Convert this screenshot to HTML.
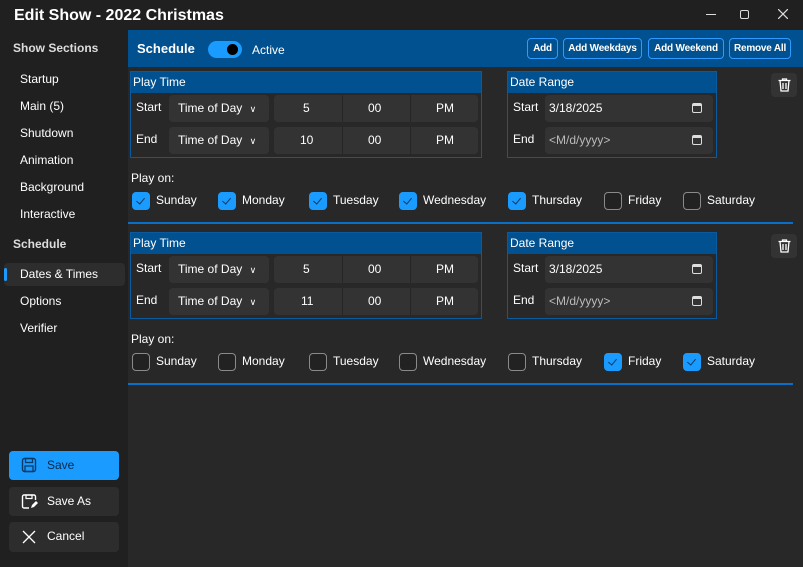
<!DOCTYPE html>
<html><head><meta charset="utf-8"><style>
*{box-sizing:border-box;margin:0;padding:0}
body{width:803px;height:567px;overflow:hidden;background:#202020;font-family:"Liberation Sans",sans-serif;color:#fff;position:relative;font-size:12px;white-space:nowrap}
.a{position:absolute}
.title{left:14px;top:7px;font-size:16px;font-weight:bold}
.side{left:0;top:30px;width:128px;height:537px;background:#202020}
.si{position:absolute;left:20px;font-size:12px}
.sh{position:absolute;left:13px;font-size:12px;color:#ddd;font-weight:bold}
.main{left:128px;top:30px;width:675px;height:537px;background:#282828}
.hdr{left:128px;top:30px;width:675px;height:37px;background:#01508f}
.btn{position:absolute;top:38px;height:21px;border:1px solid #2f9bff;border-radius:4px;background:#01508f;font-size:10px;font-weight:bold;text-align:center;line-height:19px;letter-spacing:-0.2px}
.grp{position:absolute;border:1px solid #0a5aa0;}
.gh{position:absolute;left:0;top:0;right:0;height:21px;background:#01508f;padding-left:2px;line-height:21px;font-size:12px}
.lbl{position:absolute;font-size:12px}
.box{position:absolute;background:#333;border-radius:4px;height:27px;line-height:27px;font-size:12px}
.chk{position:absolute;width:18px;height:18px;border-radius:4px;border:1px solid #8a8a8a;background:#222}
.chk.on{background:#1a9bff;border-color:#1a9bff}
.chk.on:after{content:"";position:absolute;left:5px;top:3px;width:4px;height:7px;border:solid #0a3a66;border-width:0 1.5px 1.5px 0;transform:rotate(40deg)}
.cl{position:absolute;font-size:12px}
.sep{position:absolute;left:128px;width:665px;height:2px;background:#0a6fc7}
.trash{position:absolute;left:771px;width:26px;height:24px;background:#333;border-radius:4px}
.sb{position:absolute;left:9px;width:110px;height:29px;border-radius:4px;background:#2d2d2d;font-size:12px;line-height:29px;padding-left:38px}
.cal{position:absolute;width:10px;height:10px;border:1.5px solid #ddd;border-radius:2px;border-top-width:3px}
</style></head><body>
<div class="a title">Edit Show - 2022 Christmas</div>
<div class="a" style="left:706px;top:14px;width:10px;height:1px;background:#ddd"></div>
<div class="a" style="left:740px;top:10px;width:9px;height:9px;border:1px solid #ddd;border-radius:2px"></div>
<svg class="a" style="left:778px;top:9px" width="10" height="10" viewBox="0 0 10 10"><path d="M0 0L10 10M10 0L0 10" stroke="#ddd" stroke-width="1.2"/></svg>
<div class="a side">
<div class="sh" style="top:11px">Show Sections</div>
<div class="si" style="top:42px">Startup</div>
<div class="si" style="top:69px">Main (5)</div>
<div class="si" style="top:96px">Shutdown</div>
<div class="si" style="top:123px">Animation</div>
<div class="si" style="top:150px">Background</div>
<div class="si" style="top:177px">Interactive</div>
<div class="sh" style="top:207px">Schedule</div>
<div style="position:absolute;left:4px;top:233px;width:121px;height:23px;background:#2d2d2d;border-radius:4px"></div>
<div style="position:absolute;left:4px;top:238px;width:3px;height:13px;background:#1a9bff;border-radius:2px"></div>
<div class="si" style="top:237px">Dates &amp; Times</div>
<div class="si" style="top:264px">Options</div>
<div class="si" style="top:291px">Verifier</div>
</div>
<div class="sb" style="top:451px;background:#1a9bff;color:#0a2a4a">Save</div>
<svg class="a" style="left:21px;top:457px" width="16" height="16" viewBox="0 0 16 16"><rect x="1.5" y="1.5" width="13" height="13" rx="2" fill="none" stroke="#0a3a66" stroke-width="1.4"/><rect x="4.5" y="1.5" width="7" height="4" fill="none" stroke="#0a3a66" stroke-width="1.3"/><rect x="4" y="9" width="8" height="5.5" fill="none" stroke="#0a3a66" stroke-width="1.3"/></svg>
<div class="sb" style="top:487px">Save As</div>
<svg class="a" style="left:21px;top:493px" width="17" height="17" viewBox="0 0 17 17"><path d="M8 15H3a1.5 1.5 0 0 1-1.5-1.5v-10A1.5 1.5 0 0 1 3 2h10a1.5 1.5 0 0 1 1.5 1.5V7" fill="none" stroke="#fff" stroke-width="1.4"/><rect x="5" y="2" width="6" height="3.5" fill="none" stroke="#fff" stroke-width="1.2"/><path d="M10 15l1-3 4-4 2 2-4 4z" fill="#fff"/></svg>
<div class="sb" style="top:522px;height:30px">Cancel</div>
<svg class="a" style="left:22px;top:530px" width="14" height="14" viewBox="0 0 14 14"><path d="M1 1L13 13M13 1L1 13" stroke="#fff" stroke-width="1.3"/></svg>
<div class="a main"></div>
<div class="a hdr"></div>
<div class="a" style="left:137px;top:41px;font-size:13px;font-weight:bold">Schedule</div>
<div class="a" style="left:208px;top:41px;width:34px;height:17px;border-radius:9px;background:#1a9bff"></div>
<div class="a" style="left:227px;top:44px;width:11px;height:11px;border-radius:50%;background:#000"></div>
<div class="a" style="left:252px;top:43px;font-size:12px">Active</div>
<div class="btn" style="left:527px;width:31px">Add</div>
<div class="btn" style="left:563px;width:79px">Add Weekdays</div>
<div class="btn" style="left:648px;width:76px">Add Weekend</div>
<div class="btn" style="left:729px;width:62px">Remove All</div>

<!-- block 1 -->
<div class="grp" style="left:130px;top:71px;width:352px;height:87px"><div class="gh">Play Time</div></div>
<div class="lbl" style="left:136px;top:100px">Start</div>
<div class="box" style="left:169px;top:95px;width:100px;padding-left:9px">Time of Day <span style="font-size:9px;margin-left:4px">∨</span></div>
<div class="box" style="left:274px;top:95px;width:204px"></div>
<div class="lbl" style="left:303px;top:101px">5</div><div class="a" style="left:342px;top:95px;width:1px;height:27px;background:#262626"></div><div class="lbl" style="left:368px;top:101px">00</div><div class="a" style="left:410px;top:95px;width:1px;height:27px;background:#262626"></div><div class="lbl" style="left:436px;top:101px">PM</div>
<div class="lbl" style="left:136px;top:132px">End</div>
<div class="box" style="left:169px;top:127px;width:100px;padding-left:9px">Time of Day <span style="font-size:9px;margin-left:4px">∨</span></div>
<div class="box" style="left:274px;top:127px;width:204px"></div>
<div class="lbl" style="left:300px;top:133px">10</div><div class="a" style="left:342px;top:127px;width:1px;height:27px;background:#262626"></div><div class="lbl" style="left:368px;top:133px">00</div><div class="a" style="left:410px;top:127px;width:1px;height:27px;background:#262626"></div><div class="lbl" style="left:436px;top:133px">PM</div>
<div class="grp" style="left:507px;top:71px;width:210px;height:87px"><div class="gh">Date Range</div></div>
<div class="lbl" style="left:513px;top:100px">Start</div>
<div class="box" style="left:545px;top:95px;width:168px;padding-left:4px">3/18/2025</div>
<div class="lbl" style="left:513px;top:132px">End</div>
<div class="box" style="left:545px;top:127px;width:168px;padding-left:4px;color:#bbb">&lt;M/d/yyyy&gt;</div>
<div class="cal" style="left:692px;top:103px"></div>
<div class="cal" style="left:692px;top:135px"></div>
<div class="trash" style="top:73px"></div>
<svg class="a" style="left:778px;top:78px" width="13" height="14" viewBox="0 0 13 14"><path d="M0.5 2.5H12.5M4.5 2.5V1h4v1.5M2 2.5l1 10.5h7l1-10.5M5 5v6M8 5v6" fill="none" stroke="#fff" stroke-width="1.3"/></svg>
<div class="lbl" style="left:131px;top:171px">Play on:</div>
<div class="chk on" style="left:132px;top:192px"></div><div class="cl" style="left:156px;top:193px">Sunday</div>
<div class="chk on" style="left:218px;top:192px"></div><div class="cl" style="left:242px;top:193px">Monday</div>
<div class="chk on" style="left:309px;top:192px"></div><div class="cl" style="left:333px;top:193px">Tuesday</div>
<div class="chk on" style="left:399px;top:192px"></div><div class="cl" style="left:423px;top:193px">Wednesday</div>
<div class="chk on" style="left:508px;top:192px"></div><div class="cl" style="left:532px;top:193px">Thursday</div>
<div class="chk" style="left:604px;top:192px"></div><div class="cl" style="left:628px;top:193px">Friday</div>
<div class="chk" style="left:683px;top:192px"></div><div class="cl" style="left:707px;top:193px">Saturday</div>
<div class="sep" style="top:222px"></div>

<!-- block 2 -->
<div class="grp" style="left:130px;top:232px;width:352px;height:87px"><div class="gh">Play Time</div></div>
<div class="lbl" style="left:136px;top:261px">Start</div>
<div class="box" style="left:169px;top:256px;width:100px;padding-left:9px">Time of Day <span style="font-size:9px;margin-left:4px">∨</span></div>
<div class="box" style="left:274px;top:256px;width:204px"></div>
<div class="lbl" style="left:303px;top:262px">5</div><div class="a" style="left:342px;top:256px;width:1px;height:27px;background:#262626"></div><div class="lbl" style="left:368px;top:262px">00</div><div class="a" style="left:410px;top:256px;width:1px;height:27px;background:#262626"></div><div class="lbl" style="left:436px;top:262px">PM</div>
<div class="lbl" style="left:136px;top:293px">End</div>
<div class="box" style="left:169px;top:288px;width:100px;padding-left:9px">Time of Day <span style="font-size:9px;margin-left:4px">∨</span></div>
<div class="box" style="left:274px;top:288px;width:204px"></div>
<div class="lbl" style="left:301px;top:294px">11</div><div class="a" style="left:342px;top:288px;width:1px;height:27px;background:#262626"></div><div class="lbl" style="left:368px;top:294px">00</div><div class="a" style="left:410px;top:288px;width:1px;height:27px;background:#262626"></div><div class="lbl" style="left:436px;top:294px">PM</div>
<div class="grp" style="left:507px;top:232px;width:210px;height:87px"><div class="gh">Date Range</div></div>
<div class="lbl" style="left:513px;top:261px">Start</div>
<div class="box" style="left:545px;top:256px;width:168px;padding-left:4px">3/18/2025</div>
<div class="lbl" style="left:513px;top:293px">End</div>
<div class="box" style="left:545px;top:288px;width:168px;padding-left:4px;color:#bbb">&lt;M/d/yyyy&gt;</div>
<div class="cal" style="left:692px;top:264px"></div>
<div class="cal" style="left:692px;top:296px"></div>
<div class="trash" style="top:234px"></div>
<svg class="a" style="left:778px;top:239px" width="13" height="14" viewBox="0 0 13 14"><path d="M0.5 2.5H12.5M4.5 2.5V1h4v1.5M2 2.5l1 10.5h7l1-10.5M5 5v6M8 5v6" fill="none" stroke="#fff" stroke-width="1.3"/></svg>
<div class="lbl" style="left:131px;top:332px">Play on:</div>
<div class="chk" style="left:132px;top:353px"></div><div class="cl" style="left:156px;top:354px">Sunday</div>
<div class="chk" style="left:218px;top:353px"></div><div class="cl" style="left:242px;top:354px">Monday</div>
<div class="chk" style="left:309px;top:353px"></div><div class="cl" style="left:333px;top:354px">Tuesday</div>
<div class="chk" style="left:399px;top:353px"></div><div class="cl" style="left:423px;top:354px">Wednesday</div>
<div class="chk" style="left:508px;top:353px"></div><div class="cl" style="left:532px;top:354px">Thursday</div>
<div class="chk on" style="left:604px;top:353px"></div><div class="cl" style="left:628px;top:354px">Friday</div>
<div class="chk on" style="left:683px;top:353px"></div><div class="cl" style="left:707px;top:354px">Saturday</div>
<div class="sep" style="top:383px"></div>
</body></html>
